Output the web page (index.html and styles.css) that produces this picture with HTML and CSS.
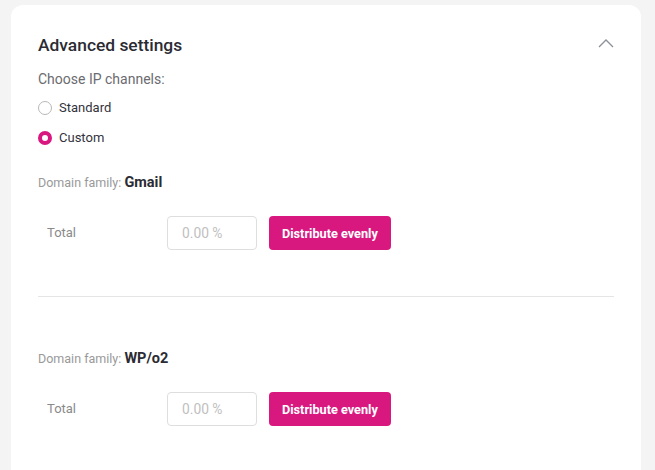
FILE: index.html
```html
<!DOCTYPE html>
<html lang="en">
<head>
<meta charset="utf-8">
<title>Advanced settings</title>
<link rel="stylesheet" href="styles.css">
</head>
<body>
<div class="card">
  <div class="header">
    <h2 class="title">Advanced settings</h2>
    <svg class="chevron" width="16" height="10" viewBox="0 0 16 10"><path d="M1 9 L8 2 L15 9" fill="none" stroke="#8a8f98" stroke-width="1.3"/></svg>
  </div>
  <div class="label">Choose IP channels:</div>
  <div class="radios">
    <label class="radio"><span class="dot"></span><span>Standard</span></label>
    <label class="radio"><span class="dot on"></span><span>Custom</span></label>
  </div>
  <section class="family">
    <div class="family-name">Domain family: <b>Gmail</b></div>
    <div class="row">
      <span class="total">Total</span>
      <div class="input">0.00 %</div>
      <button class="btn">Distribute evenly</button>
    </div>
  </section>
  <hr class="divider">
  <section class="family second">
    <div class="family-name">Domain family: <b>WP/o2</b></div>
    <div class="row">
      <span class="total">Total</span>
      <div class="input">0.00 %</div>
      <button class="btn">Distribute evenly</button>
    </div>
  </section>
</div>
</body>
</html>
```
FILE: styles.css
```css
html, body { margin: 0; padding: 0; }
body {
  background: #f4f4f4;
  font-family: Roboto, "Liberation Sans", sans-serif;
  padding: 5px 14px 0 11px;
  height: 470px;
  box-sizing: border-box;
  overflow: hidden;
}
.card {
  background: #fff;
  border-radius: 12px 12px 0 0;
  padding: 28px 27px 0 27px;
  height: 480px;
}
.header {
  display: flex;
  justify-content: space-between;
  align-items: center;
  height: 24px;
}
.title {
  margin: 0;
  font-size: 17.4px;
  font-weight: 500;
  color: #2b2b33;
  line-height: 24px;
}
.chevron { margin-top: -4px; }
.label {
  margin-top: 13px;
  font-size: 14px;
  color: #6b6b70;
  line-height: 18px;
}
.radios {
  display: flex;
  flex-direction: column;
  gap: 12px;
  margin-top: 11px;
}
.radio {
  display: flex;
  align-items: center;
  gap: 7px;
  font-size: 13px;
  color: #33333b;
  line-height: 18px;
}
.dot {
  width: 14px; height: 14px;
  border: 1px solid #b8b8b8;
  border-radius: 50%;
  box-sizing: border-box;
}
.dot.on {
  border: 4.5px solid #d9187f;
}
.family { margin-top: 27px; }
.family-name {
  font-size: 12.5px;
  color: #999;
  line-height: 18px;
}
.family-name b {
  font-size: 14.5px;
  font-weight: 700;
  color: #2b2b33;
}
.row {
  display: flex;
  align-items: center;
  margin-top: 24px;
  padding-left: 9px;
}
.total {
  width: 120px;
  font-size: 13px;
  color: #8a8a8a;
  margin-top: -1px;
}
.input {
  width: 90px; height: 34px;
  border: 1px solid #dedede;
  border-radius: 4px;
  box-sizing: border-box;
  font-size: 13.8px;
  color: #c0c0c0;
  display: flex;
  align-items: center;
  padding-left: 14px;
}
.btn {
  margin-left: 12px;
  height: 34px;
  padding: 0 13px;
  border: 0;
  border-radius: 4px;
  background: #d9187f;
  color: #fff;
  font-family: Roboto, "Liberation Sans", sans-serif;
  font-weight: 700;
  font-size: 12.7px;
}
.divider {
  border: 0;
  border-top: 1px solid #e5e5e5;
  margin: 46px 0 0 0;
}
.family.second { margin-top: 53px; }
```
